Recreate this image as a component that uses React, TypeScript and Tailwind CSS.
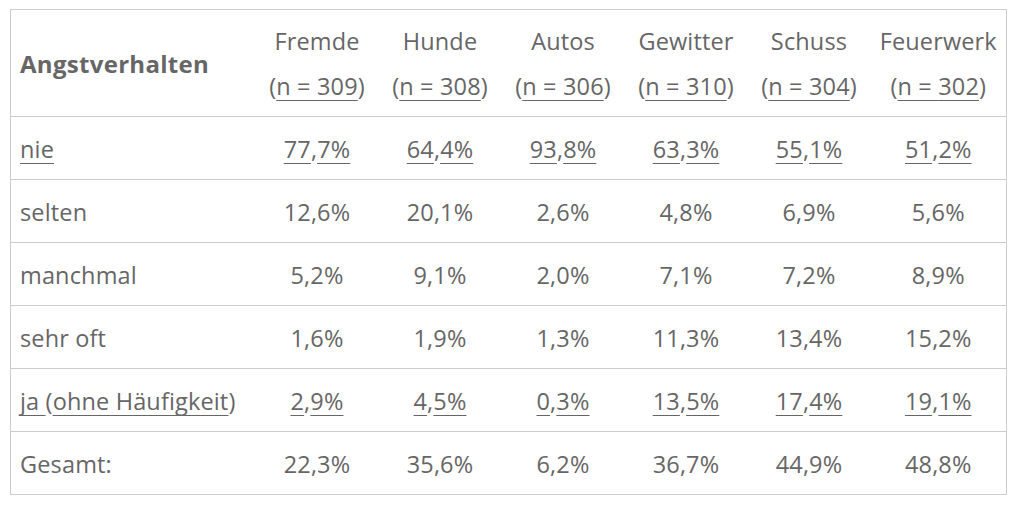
const cols = [
  { name: "Fremde", n: "309" },
  { name: "Hunde", n: "308" },
  { name: "Autos", n: "306" },
  { name: "Gewitter", n: "310" },
  { name: "Schuss", n: "304" },
  { name: "Feuerwerk", n: "302" },
]

const rows: { label: string; values: string[]; linked?: boolean }[] = [
  { label: "nie", values: ["77,7%", "64,4%", "93,8%", "63,3%", "55,1%", "51,2%"], linked: true },
  { label: "selten", values: ["12,6%", "20,1%", "2,6%", "4,8%", "6,9%", "5,6%"] },
  { label: "manchmal", values: ["5,2%", "9,1%", "2,0%", "7,1%", "7,2%", "8,9%"] },
  { label: "sehr oft", values: ["1,6%", "1,9%", "1,3%", "11,3%", "13,4%", "15,2%"] },
  { label: "ja (ohne Häufigkeit)", values: ["2,9%", "4,5%", "0,3%", "13,5%", "17,4%", "19,1%"], linked: true },
  { label: "Gesamt:", values: ["22,3%", "35,6%", "6,2%", "36,7%", "44,9%", "48,8%"] },
]

const u = "underline decoration-1 underline-offset-[5px]"

function Pct({ value }: { value: string }) {
  const [a, b] = value.split(",")
  return (
    <>
      <span className={u}>{a}</span>,<span className={u}>{b}</span>
    </>
  )
}

function Label({ text }: { text: string }) {
  if (text === "ja (ohne Häufigkeit)") {
    return (
      <>
        <span className={u}>ja </span>(<span className={u}>ohne Häufigkeit</span>)
      </>
    )
  }
  return <span className={u}>{text}</span>
}

export default function App() {
  return (
    <div className="min-h-screen bg-white px-[10px] pt-[9px] font-['Open_Sans',sans-serif] text-[23.5px] tracking-[0.15px] text-[#666]">
      <table className="w-[997px] table-fixed border-collapse border border-[#cccccc]">
        <colgroup>
          <col className="w-[245px]" />
          <col className="w-[123px]" />
          <col className="w-[123px]" />
          <col className="w-[123px]" />
          <col className="w-[123px]" />
          <col className="w-[123px]" />
          <col />
        </colgroup>
        <thead>
          <tr className="h-[107px] border-b border-[#cccccc]">
            <th className="pl-[9px] pt-[2px] text-left text-[24px] font-bold tracking-[0.3px] text-[#666]">Angstverhalten</th>
            {cols.map((c) => (
              <th key={c.name} className="text-center font-normal">
                <div className="leading-[30px]">{c.name}</div>
                <div className="mt-[15px] leading-[30px]">
                  (<span className={u}>n = {c.n}</span>)
                </div>
              </th>
            ))}
          </tr>
        </thead>
        <tbody>
          {rows.map((r) => (
            <tr key={r.label} className="h-[63px] border-b border-[#cccccc]">
              <td className="pl-[9px] pt-[4px]">{r.linked ? <Label text={r.label} /> : r.label}</td>
              {r.values.map((v, i) => (
                <td key={i} className="pt-[4px] text-center">
                  {r.linked ? <Pct value={v} /> : v}
                </td>
              ))}
            </tr>
          ))}
        </tbody>
      </table>
    </div>
  )
}
